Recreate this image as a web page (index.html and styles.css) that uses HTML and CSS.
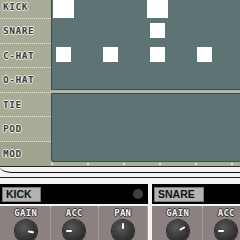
FILE: index.html
```html
<!DOCTYPE html>
<html>
<head>
<title>Drum Sequencer</title>
<link rel="stylesheet" href="styles.css">
</head>
<body>
<div class="seq">
  <div class="labels">
    <div class="lbl">KICK</div>
    <div class="lbl">SNARE</div>
    <div class="lbl">C-HAT</div>
    <div class="lbl">O-HAT</div>
    <div class="lbl">TIE</div>
    <div class="lbl">POD</div>
    <div class="lbl mod">MOD</div>
  </div>
  <div class="lanes">
    <div class="notes">
      <div class="cell"><b class="hit"></b></div><div class="cell"></div><div class="cell"></div><div class="cell"></div>
      <div class="cell"><b class="hit"></b></div><div class="cell"></div><div class="cell"></div><div class="cell"></div>

      <div class="cell"></div><div class="cell"></div><div class="cell"></div><div class="cell"></div>
      <div class="cell"><b class="hit soft"></b></div><div class="cell"></div><div class="cell"></div><div class="cell"></div>

      <div class="cell"><b class="hit soft"></b></div><div class="cell"></div><div class="cell"><b class="hit soft"></b></div><div class="cell"></div>
      <div class="cell"><b class="hit soft"></b></div><div class="cell"></div><div class="cell"><b class="hit soft"></b></div><div class="cell"></div>

      <div class="cell"></div><div class="cell"></div><div class="cell"></div><div class="cell"></div>
      <div class="cell"></div><div class="cell"></div><div class="cell"></div><div class="cell"></div>
    </div>
    <div class="split"></div>
    <div class="mods"></div>
    <div class="ticks"></div>
  </div>
</div>

<div class="rail">
  <div class="rail-band"></div>
  <div class="rail-low"></div>
</div>

<div class="channels">
  <section class="chan kick">
    <div class="chan-head">
      <span class="tab">KICK</span>
      <span class="led"></span>
    </div>
    <div class="knobs">
      <div class="knob-col">
        <span class="knob-label">GAIN</span>
        <div class="knob"><i class="needle" style="transform: rotate(100deg)"></i></div>
      </div>
      <div class="knob-col">
        <span class="knob-label">ACC</span>
        <div class="knob"><i class="needle" style="transform: rotate(-90deg)"></i></div>
      </div>
      <div class="knob-col">
        <span class="knob-label">PAN</span>
        <div class="knob"><i class="needle" style="transform: rotate(0deg)"></i></div>
      </div>
    </div>
  </section>
  <section class="chan snare">
    <div class="chan-head">
      <span class="tab">SNARE</span>
    </div>
    <div class="knobs">
      <div class="knob-col">
        <span class="knob-label">GAIN</span>
        <div class="knob"><i class="needle" style="transform: rotate(60deg)"></i></div>
      </div>
      <div class="knob-col">
        <span class="knob-label">ACC</span>
        <div class="knob"><i class="needle" style="transform: rotate(-90deg)"></i></div>
      </div>
    </div>
  </section>
</div>
</body>
</html>
```

FILE: styles.css
```css
body {
margin: 0;
width: 240px;
height: 240px;
overflow: hidden;
background-color: #f4f4f4;
font-family: "DejaVu Sans Mono", monospace;
}
.seq {
display: flex;
margin-top: -5.5px;
height: 171.5px;
}
.labels {
width: 60px;
display: flex;
flex-direction: column;
background-color: #a9ad97;
}
.lbl {
box-sizing: border-box;
height: 24.5px;
display: flex;
align-items: center;
padding-left: 3px;
border-bottom: 1px dotted #e4e8d6;
font-size: 9.5px;
font-weight: bold;
letter-spacing: 0.5px;
color: #3b3d3b;
text-shadow: 1px 0 #eef0e6, -1px 0 #eef0e6, 0 1px #eef0e6, 0 -1px #eef0e6;
}
.lbl.mod {
border-bottom: none;
background-color: #a0a38d;
}
.lanes {
flex: 1;
display: flex;
flex-direction: column;
background-color: #a9ad97;
}
.notes {
height: 94px;
margin-top: 0.75px;
display: grid;
grid-template-columns: repeat(8, 23.5px);
grid-auto-rows: 23.5px;
overflow: hidden;
background-color: #5e7474;
border-left: 1px solid #3d4c4c;
}
.cell {
display: flex;
align-items: center;
justify-content: center;
}
.hit {
width: 21px;
height: 21px;
background-color: #ffffff;
}
.hit.soft {
width: 15px;
height: 15px;
}
.split {
height: 2.5px;
background-color: #b2b6a0;
border-top: 1px solid #3d4c4c;
border-bottom: 1px solid #3d4c4c;
}
.mods {
flex: 1;
background-color: #5e7474;
border-left: 1px solid #3d4c4c;
border-bottom: 1.5px solid #3d4c4c;
border-bottom-left-radius: 3px;
}
.ticks {
height: 4px;
background-image: linear-gradient(90deg, #e4e7d8 2px, transparent 2px);
background-size: 36px 1.5px;
background-position: 0 0.5px;
background-repeat: repeat-x;
}
.rail {
height: 17px;
border-top: 1px solid #2a2a2a;
background-color: #f4f4f4;
}
.rail-band {
height: 4.5px;
border-bottom: 1.5px solid #111111;
border-bottom-left-radius: 12px 6px;
}
.rail-low {
height: 4px;
border-bottom: 1px solid #222222;
}
.channels {
display: flex;
gap: 4px;
}
.chan.kick {
width: 148px;
}
.chan.snare {
flex: 1;
overflow: hidden;
}
.chan-head {
height: 20px;
display: flex;
align-items: center;
justify-content: space-between;
padding: 0 0 0 2px;
background-color: #000000;
}
.tab {
box-sizing: border-box;
height: 15px;
display: flex;
align-items: center;
padding: 0 8px 0 3px;
background-color: #b3b3b3;
border: 1px solid #7a7a7a;
font-family: "Liberation Sans", Arial, sans-serif;
font-size: 10.5px;
font-weight: bold;
color: #111111;
}
.led {
width: 10px;
height: 10px;
margin-right: 5px;
border-radius: 50%;
background-color: #3e3e3e;
}
.knobs {
margin-top: 2px;
height: 35px;
display: grid;
grid-template-columns: repeat(3, 48.5px);
padding-left: 2px;
background-color: #8c8181;
}
.knob-col {
display: flex;
flex-direction: column;
align-items: center;
padding-top: 2px;
border-right: 1px dotted #bdb3b3;
}
.knob-label {
font-size: 9px;
font-weight: bold;
letter-spacing: 0.3px;
line-height: 10px;
color: #f4f4f4;
text-shadow: 1px 0 #3a3434, -1px 0 #3a3434, 0 1px #3a3434, 0 -1px #3a3434;
}
.knob {
position: relative;
width: 22px;
height: 22px;
margin-top: 2px;
border-radius: 50%;
background: radial-gradient(circle at 40% 35%, #5a5a5a, #2c2c2c 70%);
box-shadow: 0 0 0 1px #2a2626;
}
.needle {
position: absolute;
inset: 0;
}
.needle::after {
content: "";
position: absolute;
left: 9.75px;
top: 2.5px;
width: 2.5px;
height: 6px;
border-radius: 1px;
background-color: #ffffff;
}
```
